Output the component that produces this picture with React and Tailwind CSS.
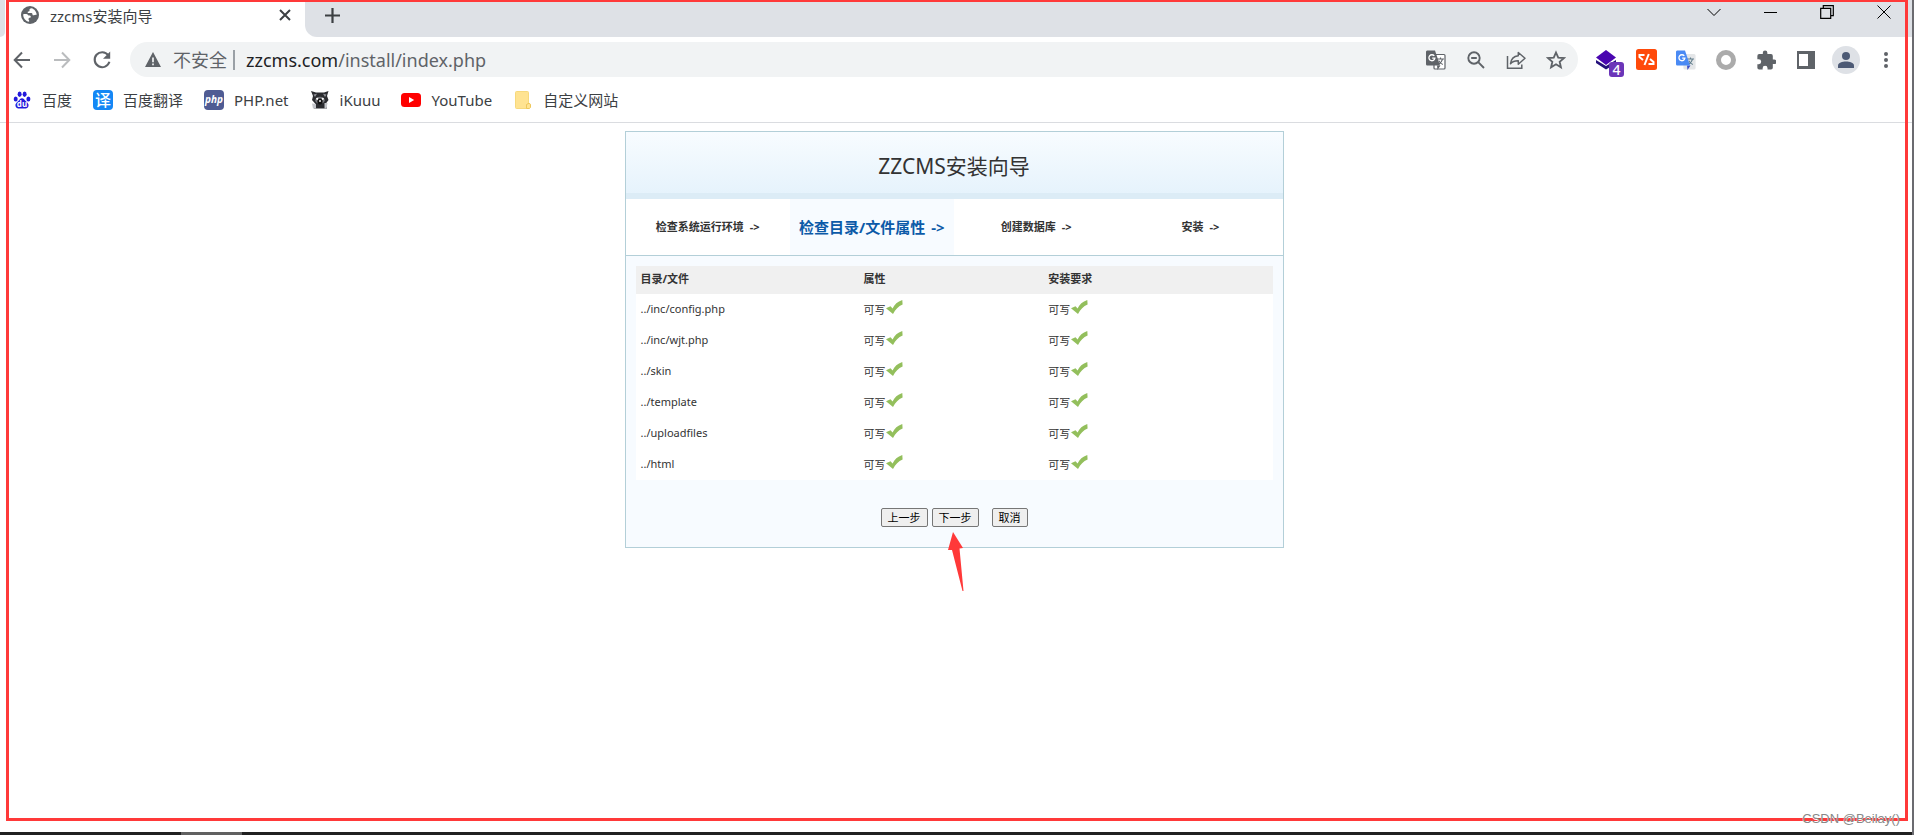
import React from 'react';

const bookmarks = [
  { icon: 'baidu', label: '百度' },
  { icon: 'fanyi', label: '百度翻译' },
  { icon: 'php', label: 'PHP.net' },
  { icon: 'ikuuu', label: 'iKuuu' },
  { icon: 'youtube', label: 'YouTube' },
  { icon: 'folder', label: '自定义网站' },
];

const steps = ['检查系统运行环境', '检查目录/文件属性', '创建数据库', '安装'];
const activeStep = 1;

const files = [
  '../inc/config.php',
  '../inc/wjt.php',
  '../skin',
  '../template',
  '../uploadfiles',
  '../html',
];

const GlobeIcon = () => (
  <svg width="18" height="18" viewBox="0 0 18 18">
    <circle cx="9" cy="9" r="9" fill="#5f6368" />
    <path
      d="M10.5 2.2c-1.6.2-2.3 1-2 2 .3.9-.5 1.3-1.3 1.4-.7.1-.7.9-.2 1.4H10c1 0 1.5.6 1.5 1.4 0 .7.6 1 1.3.9.9-.1 1.5-.8 2.9-.5-.1-3-2.3-5.9-5.2-6.6zM2.2 8.2c-.2 3.7 2.3 6.9 5.9 7.6v-1.6c-.8-.3-.8-1.2-.3-1.9.6-.8 2-.3 2-1.5 0-.9-.8-1.2-1.7-1.2-1 0-1.2-.9-2-1.3-1-.4-2.5-.3-3.900-.1z"
      fill="#fff"
    />
  </svg>
);

const BackIcon = ({ className = '' }) => (
  <svg className={className} width="18" height="18" viewBox="0 0 18 18" fill="none" stroke="currentColor" strokeWidth="2">
    <path d="M17 9H2.5M9 1.5 1.7 9 9 16.5" />
  </svg>
);

const ReloadIcon = () => (
  <svg width="20" height="20" viewBox="0 0 20 20">
    <path d="M16.2 5.2A7.5 7.5 0 1 0 17.4 11.8" fill="none" stroke="#5f6368" strokeWidth="2.1" />
    <path d="M18.2 1.5v7.2H11z" fill="#5f6368" />
  </svg>
);

const WarningIcon = () => (
  <svg width="16" height="15" viewBox="0 0 16 15">
    <path d="M8 0 16 15H0z" fill="#5f6368" />
    <path d="M8 5.5v4.8M8 11.4v1.9" stroke="#f1f3f4" strokeWidth="1.7" />
  </svg>
);

const TranslateIcon = ({ colored = false }) => (
  <svg width="20" height="20" viewBox="0 0 20 20">
    <rect x="8" y="4.5" width="11" height="14.5" rx="1" fill={colored ? '#e4e6e8' : '#fff'} stroke={colored ? '#e4e6e8' : '#5f6368'} strokeWidth="1.2" />
    <path
      d="M11 9h7M14.5 7.6V9m2 0c-.5 2.5-2 4.2-4.3 5.4m.6-3.6c.8 1.6 2.2 2.9 4 3.7"
      fill="none"
      stroke={colored ? '#607d8b' : '#5f6368'}
      strokeWidth="1.1"
    />
    <path d="M11 15.5h3.5L11.5 20z" fill={colored ? '#3a4fc8' : '#5f6368'} />
    <path d="M1.5.5H9l5 15H1.5C.7 15.5 0 15 0 14V2C0 1 .7.5 1.5.5z" fill={colored ? '#4a8af4' : '#5f6368'} />
    <path d="M8.3 5.900A3 3 0 1 0 8.900 8.200H6.200" fill="none" stroke="#fff" strokeWidth="1.3" />
  </svg>
);

const ZoomOutIcon = () => (
  <svg width="18" height="18" viewBox="0 0 18 18" fill="none" stroke="#5f6368" strokeWidth="1.9">
    <circle cx="7" cy="7" r="5.7" />
    <path d="M11.2 11.2 17 17M4.2 7h5.6" />
  </svg>
);

const ShareIcon = () => (
  <svg width="20" height="20" viewBox="0 0 20 20" fill="none" stroke="#5f6368" strokeWidth="1.5">
    <path d="M1.5 6v12.2h14.3V14.5" />
    <path d="M12.3 2.5 19 8.3l-6.7 5.9v-3.4c-3.5-.1-5.8.7-7.8 3 .5-4.3 3-7.5 7.8-8z" strokeLinejoin="round" />
  </svg>
);

const StarIcon = () => (
  <svg width="20" height="20" viewBox="0 0 24 24" fill="none" stroke="#5f6368" strokeWidth="2.2">
    <path d="m12 3 2.7 6.1 6.7.6-5 4.4 1.5 6.6L12 17.2l-5.900 3.500 1.500-6.600-5-4.400 6.700-.6z" />
  </svg>
);

const LayersIcon = () => (
  <svg width="22" height="20" viewBox="0 0 22 20">
    <path d="M1 10v3l10 6.5 10-6V10l-10 6z" fill="#24107c" />
    <path d="M11 0 21 7.5 11 15 1 7.5z" fill="#4a06b0" />
  </svg>
);

const ConverterIcon = () => (
  <svg width="21" height="21" viewBox="0 0 21 21">
    <rect width="21" height="21" rx="2.5" fill="#ff4a0a" />
    <path d="M8.5 6H3.500v2L7 11M12.800 5 8.500 16M12.500 15h5v-2L14 10" fill="none" stroke="#fff" strokeWidth="2" />
  </svg>
);

const PuzzleIcon = () => (
  <svg width="20" height="20" viewBox="0 0 22 22">
    <path
      d="M20 10.5h-1.5v-4a2 2 0 0 0-2-2h-4V3a2.500 2.500 0 0 0-5 0v1.500h-4a2 2 0 0 0-2 2v3.800H3a2.700 2.700 0 0 1 0 5.400H1.500v3.800a2 2 0 0 0 2 2h3.800V20a2.700 2.700 0 0 1 5.400 0v1.500h3.800a2 2 0 0 0 2-2v-4H20a2.500 2.500 0 0 0 0-5z"
      fill="#5f6368"
    />
  </svg>
);

const SidePanelIcon = () => (
  <svg width="18" height="18" viewBox="0 0 18 18">
    <rect width="18" height="18" fill="#5f6368" />
    <rect x="2" y="3" width="9" height="12" fill="#fff" />
  </svg>
);

const BookmarkIcon = ({ name }) => {
  switch (name) {
    case 'baidu':
      return (
        <svg width="18" height="18" viewBox="0 0 18 18" fill="#2319dc">
          <ellipse cx="2.7" cy="8" rx="2" ry="2.5" />
          <ellipse cx="6.6" cy="3.3" rx="2" ry="2.7" />
          <ellipse cx="11.6" cy="3.3" rx="2" ry="2.7" />
          <ellipse cx="15.4" cy="8" rx="2" ry="2.5" />
          <path d="M9 7.3c1.8 0 2.5 1.6 3.9 2.9 1.6 1.5 3.1 2.6 2.6 4.9-.6 2.8-3.6 2.7-6.5 2.3-2.9.4-5.9.5-6.5-2.3-.5-2.3 1-3.4 2.6-4.9C6.5 8.9 7.2 7.3 9 7.3z" />
          <text x="9" y="15.8" fontSize="8" fontWeight="700" textAnchor="middle" fill="#fff">du</text>
        </svg>
      );
    case 'fanyi':
      return <span className="flex h-5 w-5 items-center justify-center rounded-sm bg-[#1487f5] text-base leading-5 font-medium text-white">译</span>;
    case 'php':
      return <span className="flex h-5 w-5 items-center justify-center rounded-sm bg-[#4f5b93] pb-px text-[10px] leading-4 font-bold text-white italic">php</span>;
    case 'ikuuu':
      return (
        <svg width="18" height="18" viewBox="0 0 18 18">
          <path d="M0 0 5 1.500h8L17.500 0l-1.500 5 1.500 4-3 4L16 17.500H3l1.500-4.500-3.500-4 1-4z" fill="#2b2c30" />
          <path d="M1 12.500 5 13v4.500H2zM13.500 12h3l-1 5.500h-2z" fill="#c3c5ca" />
          <path d="M2.500 3.500 6 2.800 4 6zM15.500 3.500 12 2.800 14 6z" fill="#8d8f95" />
          <ellipse cx="9" cy="9.3" rx="4.7" ry="3.6" fill="#77787d" />
          <ellipse cx="9" cy="10.5" rx="2.6" ry="3" fill="#111" />
          <circle cx="6.2" cy="7.8" r="1.1" fill="#fff" />
          <circle cx="11.8" cy="7.8" r="1.1" fill="#fff" />
          <circle cx="9" cy="10" r="1" fill="#eee" />
        </svg>
      );
    case 'youtube':
      return (
        <svg width="20" height="14" viewBox="0 0 20 14">
          <rect width="20" height="14" rx="3.5" fill="#f00" />
          <path d="M8 4v6l5.2-3z" fill="#fff" />
        </svg>
      );
    default:
      return (
        <svg width="16" height="18" viewBox="0 0 16 18">
          <path d="M1.5.5h11a1 1 0 0 1 1 1v11l-2 1v4h-10a1 1 0 0 1-1-1v-15a1 1 0 0 1 1-1z" fill="#ffe391" stroke="#f7d97c" />
          <path d="M11.5 17.5v-4l2.5-1.2 1.5 1v3l-1 1.200z" fill="#ffe391" stroke="#eec75a" />
        </svg>
      );
  }
};

const TickIcon = () => (
  <svg className="mb-1" width="17" height="14" viewBox="0 0 17 14">
    <path d="M0 8.2 4.5 6.3 6.6 8.6C8.4 4.6 11.5 1.5 16.3 0L16.6 4.5C12.3 6 9.5 9.5 7 14z" fill="#93bf5c" />
  </svg>
);

const IconButton = ({ label, children }) => (
  <button type="button" aria-label={label} className="relative flex h-[35px] w-10 items-center justify-center">
    {children}
  </button>
);

const TabStrip = () => (
  <div className="flex h-[37px]">
    <div className="w-[5px] rounded-br-lg bg-[#dee1e6]" />
    <div className="flex w-[300px] items-start pt-1.5 pr-3 pl-4">
      <GlobeIcon />
      <span className="ml-[11px] flex-1 text-[15px] leading-5 text-[#3c4043]">zzcms安装向导</span>
      <button type="button" aria-label="关闭标签页" className="flex h-[18px] w-4 items-center justify-center">
        <svg width="12" height="12" viewBox="0 0 12 12" stroke="#3c4043" strokeWidth="2">
          <path d="m1 1 10 10M11 1 1 11" />
        </svg>
      </button>
    </div>
    <div className="flex flex-1 items-start justify-between rounded-bl-xl bg-[#dee1e6] pl-5">
      <button type="button" aria-label="新标签页" className="mt-2">
        <svg width="15" height="15" viewBox="0 0 15 15" stroke="#3c4043" strokeWidth="2.2">
          <path d="M7.5 0v15M0 7.5h15" />
        </svg>
      </button>
      <div className="flex h-6 text-black">
        <button type="button" aria-label="搜索标签页" className="flex w-14 items-center justify-center">
          <svg width="14" height="14" viewBox="0 0 14 14" fill="none" stroke="currentColor"><path d="m.5 4 6.500 6.500L13.500 4" /></svg>
        </button>
        <button type="button" aria-label="最小化" className="flex w-14 items-center justify-center">
          <svg width="13" height="14" viewBox="0 0 13 14" stroke="currentColor"><path d="M0 7.500h13" /></svg>
        </button>
        <button type="button" aria-label="还原" className="flex w-[58px] items-center justify-center">
          <svg width="14" height="14" viewBox="0 0 14 14" fill="none" stroke="currentColor" strokeWidth="1.2"><path d="M.7 3.3h10v10H.7zM3.3 3.3V.7h10v10h-2.6" /></svg>
        </button>
        <button type="button" aria-label="关闭" className="flex w-14 items-center justify-center">
          <svg width="14" height="14" viewBox="0 0 14 14" stroke="currentColor"><path d="m.5.5 13 13M13.5.5l-13 13" /></svg>
        </button>
      </div>
    </div>
  </div>
);

const Toolbar = () => (
  <div className="flex items-center pt-[5px] pr-1.5 pl-0.5">
    <div className="flex w-32 items-center text-[#5f6368]">
      <IconButton label="后退"><BackIcon /></IconButton>
      <IconButton label="前进"><BackIcon className="rotate-180 text-[#babcbe]" /></IconButton>
      <IconButton label="重新加载"><ReloadIcon /></IconButton>
    </div>
    <div className="flex h-[35px] flex-1 items-center rounded-full bg-[#f1f3f4] pr-0.5 pl-[15px] text-lg leading-6">
      <WarningIcon />
      <span className="ml-3 border-r-2 border-[#9aa0a6] pr-1.5 leading-5 text-[#5f6368]">不安全</span>
      <div className="ml-[11px] flex-1 text-[#5f6368]">
        <span className="text-[#202124]">zzcms.com</span>/install/index.php
      </div>
      <IconButton label="翻译此页"><TranslateIcon /></IconButton>
      <IconButton label="缩小"><ZoomOutIcon /></IconButton>
      <IconButton label="分享"><ShareIcon /></IconButton>
      <IconButton label="收藏"><StarIcon /></IconButton>
    </div>
    <div className="ml-2 flex items-center">
      <IconButton label="图层扩展">
        <LayersIcon />
        <span className="absolute right-0.5 bottom-0 h-[15px] w-[15px] rounded-[3px] bg-[#6b35b8] text-center text-sm leading-4 font-medium text-white">4</span>
      </IconButton>
      <IconButton label="转换扩展"><ConverterIcon /></IconButton>
      <IconButton label="谷歌翻译"><TranslateIcon colored /></IconButton>
      <IconButton label="圆环扩展"><span className="h-5 w-5 rounded-full border-[5px] border-[#ababab]" /></IconButton>
      <IconButton label="扩展程序"><PuzzleIcon /></IconButton>
      <IconButton label="侧边栏"><SidePanelIcon /></IconButton>
      <IconButton label="个人资料">
        <svg width="28" height="28" viewBox="0 0 28 28">
          <circle cx="14" cy="14" r="14" fill="#dee1e6" />
          <circle cx="14" cy="10" r="4" fill="#4d5a75" />
          <path d="M6 22v-2.5C6 16.8 10.5 15.5 14 15.5s8 1.300 8 4V22z" fill="#4d5a75" />
        </svg>
      </IconButton>
      <IconButton label="更多">
        <svg width="4" height="16" viewBox="0 0 4 16" fill="#5f6368">
          <circle cx="2" cy="2" r="2" />
          <circle cx="2" cy="8" r="2" />
          <circle cx="2" cy="14" r="2" />
        </svg>
      </IconButton>
    </div>
  </div>
);

const BookmarkBar = () => (
  <nav className="flex h-[46px] items-center gap-[21px] border-b border-[#dadce0] pl-3 text-[15px] leading-5 text-[#3c4043]">
    {bookmarks.map((item) => (
      <a key={item.label} href="#" className="flex items-center gap-2.5">
        <span className="flex h-5 w-5 items-center justify-center">
          <BookmarkIcon name={item.icon} />
        </span>
        {item.label}
      </a>
    ))}
  </nav>
);

const Writable = () => (
  <span className="flex items-end gap-px">
    可写
    <TickIcon />
  </span>
);

const WizardButton = ({ children }) => (
  <button type="button" className="h-[19px] rounded-xs border border-[#767676] bg-[#efefef] px-1.5 text-[11px] leading-4 text-black">
    {children}
  </button>
);

const InstallWizard = () => (
  <section className="w-[659px] border border-[#b3cfd8] bg-[#f7fbff] text-[11px] leading-4 text-[#333]">
    <h1 className="flex h-[67px] items-center justify-center border-b-[6px] border-[#dcecf6] bg-linear-to-b from-[#f8fcff] to-[#e6f3fc] pt-1.5 text-[21px] leading-7 font-normal">
      ZZCMS安装向导
    </h1>
    <ol className="grid h-[57px] grid-cols-4 border-b border-[#b3cfd8] bg-white font-bold">
      {steps.map((step, index) => (
        <li
          key={step}
          className={`flex items-center justify-center gap-1.5 whitespace-nowrap ${
            index === activeStep ? 'bg-[#f7fbff] text-[15px] text-[#0c5aa8]' : ''
          }`}
        >
          {step}
          <span>-&gt;</span>
        </li>
      ))}
    </ol>
    <div className="px-2.5 pt-2.5 pb-5">
      <table className="w-full table-fixed bg-white text-left">
        <thead>
          <tr className="h-7 bg-[#f0f0f0]">
            <th className="w-[35%] px-[5px] pb-0.5">目录/文件</th>
            <th className="w-[29%] px-[5px] pb-0.5">属性</th>
            <th className="w-[36%] px-[5px] pb-0.5">安装要求</th>
          </tr>
        </thead>
        <tbody>
          {files.map((file) => (
            <tr key={file} className="h-[31px]">
              <td className="px-[5px] pb-0.5">{file}</td>
              <td className="px-[5px] pb-0.5"><Writable /></td>
              <td className="px-[5px] pb-0.5"><Writable /></td>
            </tr>
          ))}
        </tbody>
      </table>
      <div className="relative mt-7 flex justify-center gap-1">
        <WizardButton>上一步</WizardButton>
        <WizardButton>下一步</WizardButton>
        <span className="w-[5px]" />
        <WizardButton>取消</WizardButton>
        <svg className="absolute top-6 left-1/2 -ml-1.5" width="16" height="59" viewBox="0 0 16 59">
          <path d="M5 0 15 16 11.5 16.5 15.5 59H14.5L4 18 0 18z" fill="#ff3939" />
        </svg>
      </div>
    </div>
  </section>
);

export default function App() {
  return (
    <div className="relative flex min-h-screen flex-col border-r-2 border-[#6b6b70] bg-white font-['Noto_Sans','Noto_Sans_CJK_SC',sans-serif]">
      <header>
        <TabStrip />
        <Toolbar />
        <BookmarkBar />
      </header>
      <main className="flex flex-1 justify-center pt-2 pr-1 pb-8">
        <div>
          <InstallWizard />
        </div>
      </main>
      <footer className="flex h-[3px] bg-[#202020]">
        <div className="ml-[181px] w-[61px] bg-[#606060]" />
      </footer>
      <div className="pointer-events-none absolute top-0 right-1 bottom-3.5 left-1.5 border-3 border-t-2 border-[#ff3939]" />
      <span className="absolute right-3 bottom-1.5 font-['Liberation_Sans',Arial,sans-serif] text-[13px] leading-5 text-[#888] text-shadow-2xs text-shadow-white">
        CSDN @Beilay()
      </span>
    </div>
  );
}
